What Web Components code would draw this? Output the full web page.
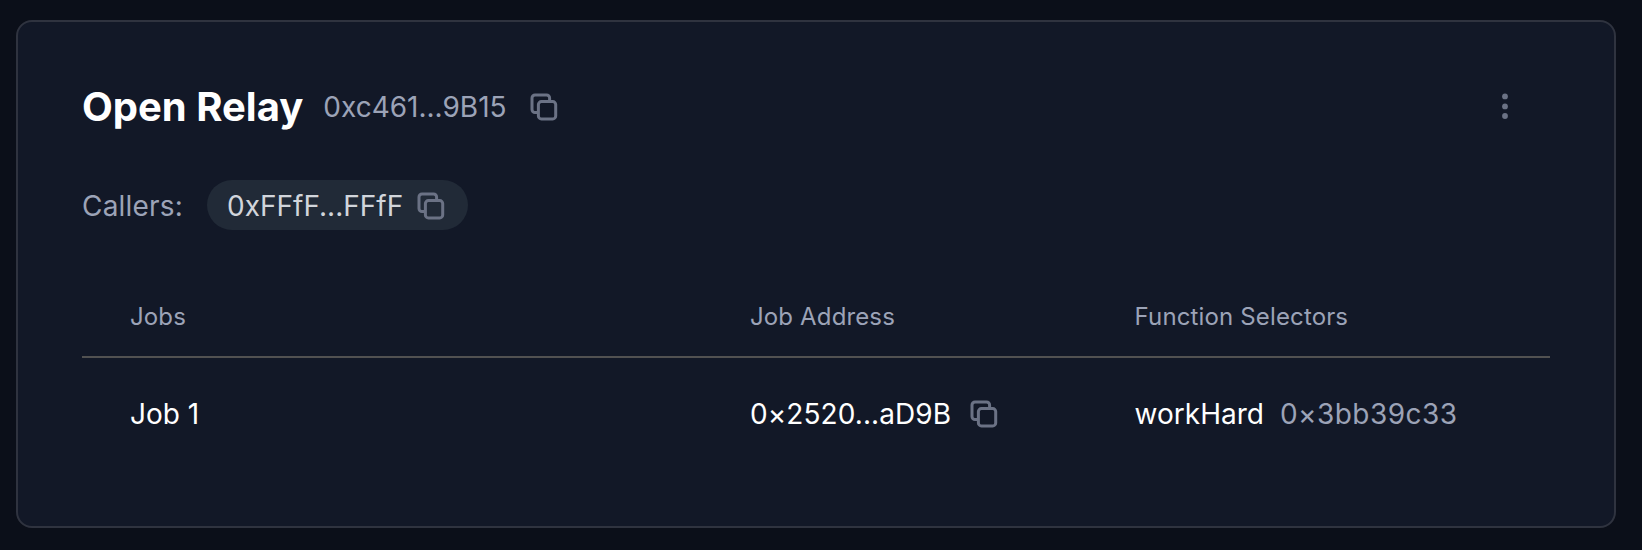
<!DOCTYPE html>
<html lang="en">
<head>
<meta charset="utf-8">
<title>Open Relay</title>
<style>
body { margin: 0; background: #0b0f19; font-family: Inter, sans-serif; }
</style>
</head>
<body>
<relay-card name="Open Relay" address="0xc461...9B15">
  <caller-chip slot="callers">0xFFfF...FFfF</caller-chip>
  <job-table>
    <job-row name="Job 1" address="0×2520...aD9B" fn="workHard" selector="0×3bb39c33"></job-row>
  </job-table>
</relay-card>
<script>
const define = (tag, html) => customElements.define(tag, class extends HTMLElement {
  constructor() {
    super();
    const t = document.createElement('template');
    t.innerHTML = html;
    this.attachShadow({ mode: 'open' }).append(t.content.cloneNode(true));
    this.shadowRoot.querySelectorAll('[data-attr]').forEach(el => {
      el.textContent = this.getAttribute(el.dataset.attr);
    });
  }
});

define('copy-icon', `
<style>
:host { display: block; flex: none; width: 28px; height: 28px; color: #6b7285; }
svg { display: block; }
</style>
<svg width="28" height="28" viewBox="0 0 28 28" fill="none" stroke="currentColor" stroke-width="3" stroke-linejoin="round">
  <rect x="8.4" y="8.6" width="17.3" height="17.3" rx="3"/>
  <path d="M8.4 19.6H5A3 3 0 0 1 2 16.6V5A3 3 0 0 1 5 2H16.6A3 3 0 0 1 19.6 5V8.4"/>
</svg>`);

define('more-icon', `
<style>
:host { display: block; width: 6px; height: 26px; color: #6b7285; }
svg { display: block; }
</style>
<svg width="6" height="26" viewBox="0 0 6 26" fill="currentColor">
  <circle cx="3" cy="3.4" r="2.9"/><circle cx="3" cy="13.4" r="2.9"/><circle cx="3" cy="23" r="2.9"/>
</svg>`);

define('caller-chip', `
<style>
:host { display: flex; align-items: center; box-sizing: border-box; height: 50px; padding: 1px 23px 0 20px; gap: 14px;
  border-radius: 25px; background: #212a37; color: #d1d5db; font-size: 28px; line-height: 48px; letter-spacing: 0; }
span { padding-top: 1px; }
</style>
<span><slot></slot></span><copy-icon></copy-icon>`);

define('job-row', `
<style>
:host { display: grid; grid-template-columns: 620px 384.6px 1fr; padding-left: 48px; height: 112px; align-items: center;
  color: #fff; font-size: 28px; line-height: 40px; }
div { display: flex; align-items: center; white-space: nowrap; }
.address { gap: 19px; letter-spacing: 0.08px; }
.fn { gap: 16px; }
.selector { color: #9ca3b7; letter-spacing: 0.45px; }
</style>
<div data-attr="name"></div>
<div class="address"><span data-attr="address"></span><copy-icon></copy-icon></div>
<div class="fn"><span data-attr="fn"></span><span class="selector" data-attr="selector"></span></div>`);

define('job-table', `
<style>
:host { display: block; }
header { display: grid; grid-template-columns: 620px 384.6px 1fr; box-sizing: border-box; padding: 2px 0 0 48px; height: 82px; align-items: center;
  border-bottom: 2px solid #515151; color: #9ca3b7; font-size: 24px; line-height: 40px; letter-spacing: 0.14px; }
</style>
<header><span>Jobs</span><span>Job Address</span><span>Function Selectors</span></header>
<slot></slot>`);

define('relay-card', `
<style>
:host { display: block; box-sizing: border-box; width: 1600px; height: 508px; margin: 20px 0 0 16px; padding: 60px 64px 0;
  border: 2px solid #2f333f; border-radius: 16px; background: #121827; }
.title { display: flex; align-items: center; height: 50px; }
h1 { margin: 0 20px 0 0; color: #fff; font-size: 40px; font-weight: 700; line-height: 50px; }
.address { margin-right: 23.2px; color: #9ca3b7; font-size: 28px; line-height: 40px; }
more-icon { margin: 0 42px 2px auto; }
.callers { display: flex; align-items: center; gap: 24px; height: 50px; margin: 48px 0 46px; color: #9ca3b7; font-size: 28px; letter-spacing: 0.2px; }
.callers span { padding-top: 2px; }
</style>
<div class="title"><h1 data-attr="name"></h1><span class="address" data-attr="address"></span><copy-icon></copy-icon><more-icon></more-icon></div>
<div class="callers"><span>Callers:</span><slot name="callers"></slot></div>
<slot></slot>`);
</script>
</body>
</html>
